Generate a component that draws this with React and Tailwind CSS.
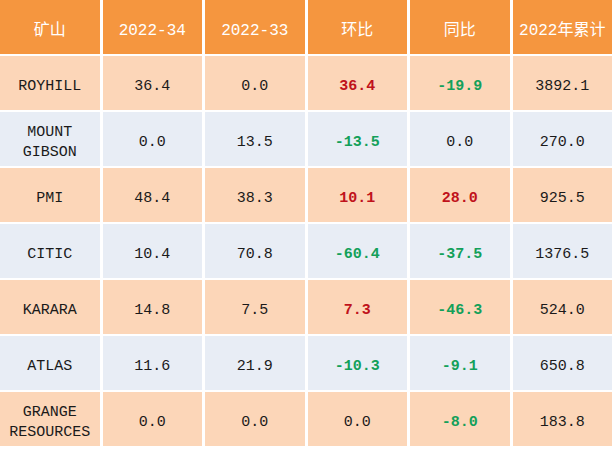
import React from "react";

const headers = ["矿山", "2022-34", "2022-33", "环比", "同比", "2022年累计"];

const rows = [
  ["ROYHILL", "36.4", "0.0", "36.4", "-19.9", "3892.1"],
  ["MOUNT\nGIBSON", "0.0", "13.5", "-13.5", "0.0", "270.0"],
  ["PMI", "48.4", "38.3", "10.1", "28.0", "925.5"],
  ["CITIC", "10.4", "70.8", "-60.4", "-37.5", "1376.5"],
  ["KARARA", "14.8", "7.5", "7.3", "-46.3", "524.0"],
  ["ATLAS", "11.6", "21.9", "-10.3", "-9.1", "650.8"],
  ["GRANGE\nRESOURCES", "0.0", "0.0", "0.0", "-8.0", "183.8"],
];

function valueClass(v, col) {
  if (col !== 3 && col !== 4) return "text-[#1a1a1a]";
  const n = Number(v);
  if (n > 0) return "text-[#c0121b] font-bold";
  if (n < 0) return "text-[#13a05a] font-bold";
  return "text-[#1a1a1a]";
}

export default function App() {
  return (
    <div className="w-[614px] h-[450px] bg-white overflow-hidden font-['Liberation_Mono','Noto_Sans_CJK_SC',monospace]">
      <div className="w-[612px] grid grid-cols-6 gap-x-[3px] gap-y-[2px]">
        {headers.map((h) => (
          <div
            key={h}
            className="h-[54px] pt-[8px] bg-[#f5963f] text-white text-[16px] flex items-center justify-center"
          >
            {h}
          </div>
        ))}
        {rows.map((row, i) =>
          row.map((cell, j) => (
            <div
              key={i + "-" + j}
              className={`h-[54px] pt-[8px] flex items-center justify-center text-center text-[15px] leading-[20px] whitespace-pre-line ${
                i % 2 === 0 ? "bg-[#fcd6b8]" : "bg-[#e8edf5]"
              } ${valueClass(cell, j)}`}
            >
              {cell}
            </div>
          ))
        )}
      </div>
    </div>
  );
}
